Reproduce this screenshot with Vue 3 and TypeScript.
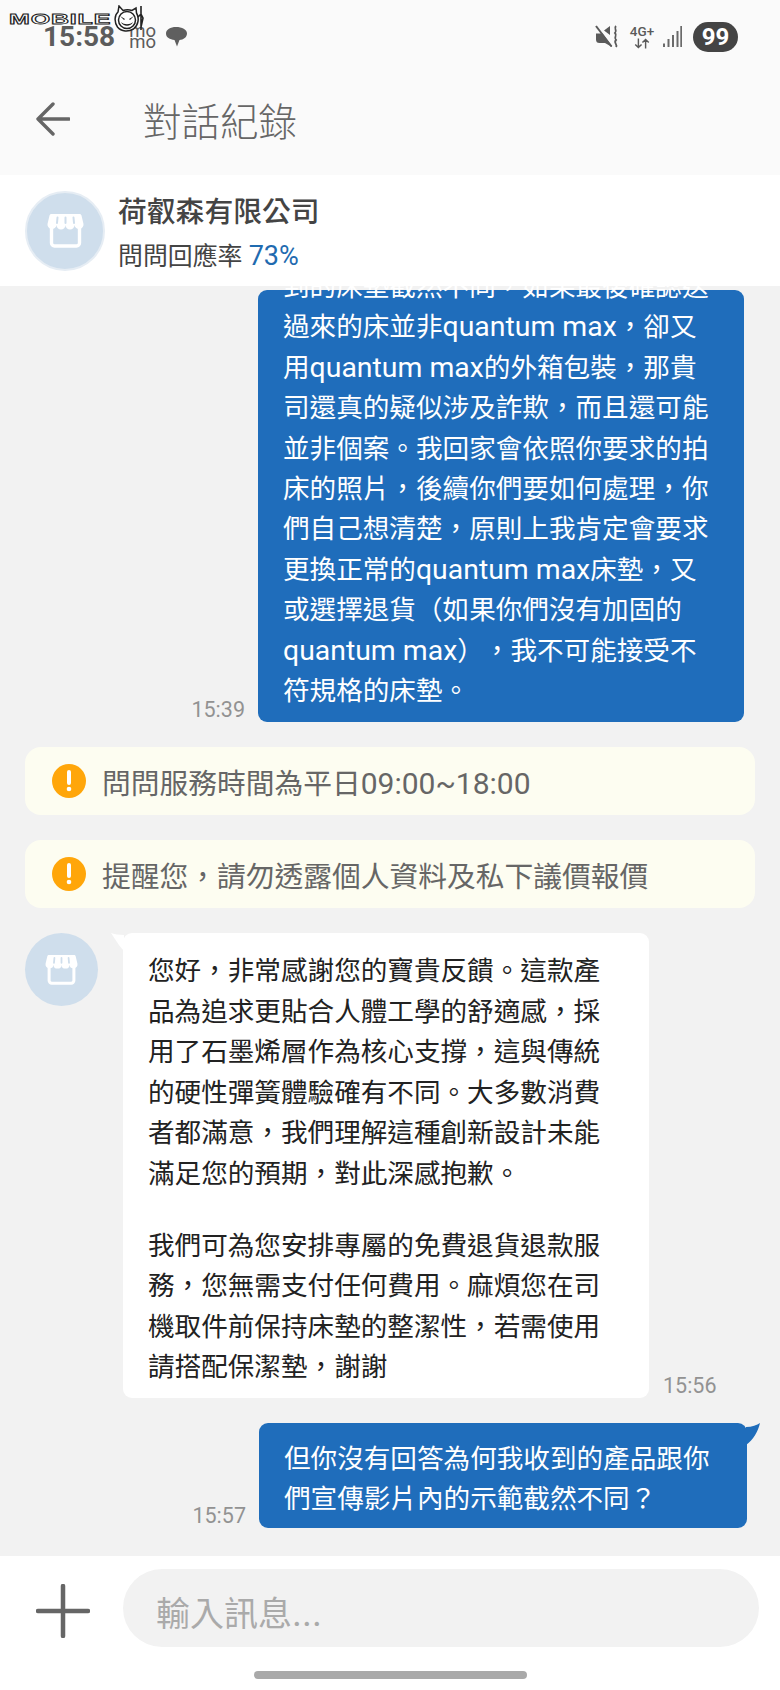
<script setup lang="ts">
const firstMessage = [
  '到的床墊截然不同，如果最後確認送',
  '過來的床並非quantum max，卻又',
  '用quantum max的外箱包裝，那貴',
  '司還真的疑似涉及詐欺，而且還可能',
  '並非個案。我回家會依照你要求的拍',
  '床的照片，後續你們要如何處理，你',
  '們自己想清楚，原則上我肯定會要求',
  '更換正常的quantum max床墊，又',
  '或選擇退貨（如果你們沒有加固的',
  'quantum max），我不可能接受不',
  '符規格的床墊。',
]

const notices = ['問問服務時間為平日09:00~18:00', '提醒您，請勿透露個人資料及私下議價報價']

const replyParagraphs = [
  [
    '您好，非常感謝您的寶貴反饋。這款產',
    '品為追求更貼合人體工學的舒適感，採',
    '用了石墨烯層作為核心支撐，這與傳統',
    '的硬性彈簧體驗確有不同。大多數消費',
    '者都滿意，我們理解這種創新設計未能',
    '滿足您的預期，對此深感抱歉。',
  ],
  [
    '我們可為您安排專屬的免費退貨退款服',
    '務，您無需支付任何費用。麻煩您在司',
    '機取件前保持床墊的整潔性，若需使用',
    '請搭配保潔墊，謝謝',
  ],
]

const lastMessage = ['但你沒有回答為何我收到的產品跟你', '們宣傳影片內的示範截然不同？']

// latin words sit a bit larger than the CJK around them
const latinWords = /(quantum max|09:00~18:00)/
const splitLatin = (line: string) => line.split(latinWords).filter(Boolean)
const isLatin = (part: string) => latinWords.test(part)
</script>

<template>
  <div class="page" lang="zh-TW">
    <header class="top">
      <div class="status">
        <div class="status-left">
          <span class="clock">15:58</span>
          <span class="momo"><span>mo</span><span>mo</span></span>
          <svg class="chat-icon" viewBox="0 0 23 22">
            <path d="M11 1c6 0 11 2.400 11 6.500 0 3.800-3.500 6.300-7.500 6.500l-2.500 6.500-2.500-6.600C5 13.600 1 11.500 1 7.500 1 3.400 5.500 1 11 1z" fill="#5f5f5f" />
          </svg>
        </div>
        <div class="status-right">
          <svg class="mute" viewBox="0 0 24 24">
            <path d="M1 8.500h4.500L8 7l9 12v3l-7-4H4.500A3.500 3.500 0 0 1 1 14.500z" fill="#5a5a5a" />
            <path d="M9 5.500 15 1v9z" fill="#5a5a5a" />
            <path d="M2.500 0 18 20.500" stroke="#fafafa" stroke-width="2.200" />
            <path d="M1 1 16.500 21.500" stroke="#5a5a5a" stroke-width="2" />
            <path d="M21 1c-3 3 2 4-1 7 3 3-2 4 1 7-3 3 2 4 0 7" fill="none" stroke="#5a5a5a" stroke-width="1.800" />
          </svg>
          <div class="net">
            <span>4G+</span>
            <svg viewBox="0 0 20 11">
              <path d="M6 0v10M2.500 6.500 6 10l3.500-3.500M14 11V1M10.500 4.500 14 1l3.500 3.500" fill="none" stroke="#5a5a5a" stroke-width="1.600" />
            </svg>
          </div>
          <svg class="signal" viewBox="0 0 20 21">
            <path d="M1 17.500h2V21H1zM5.500 13h2v8h-2zM10 9h2v12h-2zM14.500 5h2v16h-2zM18.300 0H20v21h-1.700z" fill="#6a6a6a" />
          </svg>
          <span class="battery">99</span>
        </div>
      </div>
      <div class="title-bar">
        <svg class="back" viewBox="0 0 34 34">
          <path d="M33 17H3M17 2 2 17l15 15" fill="none" stroke="#666" stroke-width="3.400" stroke-linecap="round" stroke-linejoin="round" />
        </svg>
        <h1 class="title">對話紀錄</h1>
      </div>
    </header>

    <div class="contact">
      <div class="avatar avatar-ring">
        <svg class="store" viewBox="0 0 37 35">
          <path d="M4.500 1h28c1 0 1.800.6 2 1.500L36.500 11a4.500 4.500 0 0 1-9 1 4.500 4.500 0 0 1-9 0 4.500 4.500 0 0 1-9 0 4.500 4.500 0 0 1-9-1l2-8.500C2.700 1.600 3.500 1 4.500 1z" fill="#fff" />
          <path class="slot" d="M10.500 4.500 10 10M18.500 4.500V10M26.500 4.500 27 10" />
          <path d="M4.500 13v17a3 3 0 0 0 3 3h22a3 3 0 0 0 3-3V13" fill="none" stroke="#fff" stroke-width="3.400" />
        </svg>
      </div>
      <div class="contact-text">
        <div class="company">荷叡森有限公司</div>
        <div class="rate">問問回應率 <span class="rate-num">73%</span></div>
      </div>
    </div>

    <main class="chat">
      <div class="row row-mine">
        <span class="time">15:39</span>
        <div class="bubble bubble-mine bubble-cut">
          <div v-for="line in firstMessage" :key="line" class="line">
            <template v-for="part in splitLatin(line)" :key="part">
              <span v-if="isLatin(part)" class="latin">{{ part }}</span>
              <template v-else>{{ part }}</template>
            </template>
          </div>
        </div>
      </div>

      <div v-for="text in notices" :key="text" class="notice">
        <svg class="warn" viewBox="0 0 34 34">
          <circle cx="17" cy="17" r="17" fill="#ffa60a" />
          <path d="M17 8v11" stroke="#fff" stroke-width="4" stroke-linecap="round" />
          <circle cx="17" cy="25" r="2.300" fill="#fff" />
        </svg>
        <span>
          <template v-for="part in splitLatin(text)" :key="part">
            <span v-if="isLatin(part)" class="notice-latin">{{ part }}</span>
            <template v-else>{{ part }}</template>
          </template>
        </span>
      </div>

      <div class="row">
        <div class="avatar avatar-small">
          <svg class="store store-small" viewBox="0 0 37 35">
            <path d="M4.500 1h28c1 0 1.800.6 2 1.500L36.500 11a4.500 4.500 0 0 1-9 1 4.500 4.500 0 0 1-9 0 4.500 4.500 0 0 1-9 0 4.500 4.500 0 0 1-9-1l2-8.500C2.700 1.600 3.500 1 4.500 1z" fill="#fff" />
            <path class="slot" d="M10.500 4.500 10 10M18.500 4.500V10M26.500 4.500 27 10" />
            <path d="M4.500 13v17a3 3 0 0 0 3 3h22a3 3 0 0 0 3-3V13" fill="none" stroke="#fff" stroke-width="3.400" />
          </svg>
        </div>
        <div class="bubble bubble-other">
          <svg class="tail tail-left" viewBox="0 0 13 18"><path d="M0 0c3 1 8 2 13 2v16C9 14 4 6 0 0z" fill="#fff" /></svg>
          <p v-for="(para, i) in replyParagraphs" :key="i" class="para">
            <span v-for="line in para" :key="line" class="line">{{ line }}</span>
          </p>
        </div>
        <span class="time">15:56</span>
      </div>

      <div class="row row-mine row-last">
        <span class="time">15:57</span>
        <div class="bubble bubble-mine bubble-last">
          <svg class="tail tail-right" viewBox="0 0 14 22"><path d="M14 0C11 2 6 4 0 4v18C7 17 12 9 14 0z" fill="#1f6dbb" /></svg>
          <div v-for="line in lastMessage" :key="line" class="line">{{ line }}</div>
        </div>
      </div>
    </main>

    <footer class="composer">
      <div class="input-row">
        <svg class="plus" viewBox="0 0 54 54">
          <path d="M27 2v50M2 27h50" stroke="#666" stroke-width="4.500" stroke-linecap="round" />
        </svg>
        <div class="input">輸入訊息<span class="dots">...</span></div>
      </div>
      <div class="home-bar"></div>
    </footer>

    <div class="watermark">
      <span class="wm-text">MOBILE</span>
      <svg class="wm-face" viewBox="0 0 30 28">
        <path d="M5 1l4 4.500c3-1 6-1 9 0L22 3l.5 5c3 5 2 12-3 16-5 3-12 3-16-2C0 17 .5 10 4 7z" fill="#fff" stroke="#222" stroke-width="1.500" />
        <circle cx="13" cy="15" r="8.500" fill="#fff" stroke="#222" stroke-width="1.500" />
        <path d="M6 11l5 3-1 1zM20 11l-5 3 1 1zM7 17c3 3 9 3 12 0-2 5-10 5-12 0z" fill="#222" />
        <path d="M27 1v24M24 12l3-3 2 4-2 9" fill="none" stroke="#222" stroke-width="1.600" />
      </svg>
    </div>
  </div>
</template>

<style>
html,
body {
  margin: 0;
  padding: 0;
}
</style>

<style scoped>
.page {
  position: relative;
  width: 780px;
  height: 1690px;
  overflow: hidden;
  display: flex;
  flex-direction: column;
  background: #f2f2f2;
  font-family: Roboto, "Noto Sans CJK TC", sans-serif;
  text-spacing-trim: space-all;
}

.top {
  height: 175px;
  flex: none;
  background: #fafafa;
}

.status {
  height: 73px;
  padding: 0 42px 0 43px;
  display: flex;
  justify-content: space-between;
  align-items: center;
}

.status-left,
.status-right {
  display: flex;
  align-items: center;
}

.clock {
  font-size: 28px;
  font-weight: 700;
  color: #5c5c5c;
}

.momo {
  display: flex;
  flex-direction: column;
  margin-left: 14px;
  font-size: 18.500px;
  line-height: 11px;
  color: #5c5c5c;
}

.chat-icon {
  width: 23px;
  height: 22px;
  margin-left: 9px;
}

.mute {
  width: 24px;
  height: 24px;
}

.net {
  width: 26px;
  margin-left: 10px;
  display: flex;
  flex-direction: column;
  align-items: center;
  font-size: 13.500px;
  line-height: 13px;
  font-weight: 500;
  color: #5a5a5a;
}

.net svg {
  width: 18px;
  height: 11px;
}

.signal {
  width: 20px;
  height: 21px;
  margin-left: 7px;
}

.battery {
  width: 45px;
  height: 30px;
  margin-left: 11px;
  border-radius: 15px;
  background: #444;
  color: #fff;
  font-size: 24px;
  font-weight: 700;
  line-height: 30px;
  text-align: center;
}

.title-bar {
  height: 91px;
  padding-left: 36px;
  display: flex;
  align-items: center;
}

.back {
  width: 34px;
  height: 34px;
}

.title {
  margin: 0 0 0 73px;
  font-size: 38.500px;
  font-weight: 300;
  color: #666;
}

.contact {
  height: 111px;
  flex: none;
  box-sizing: border-box;
  padding-left: 25px;
  display: flex;
  align-items: center;
  background: #fff;
}

.avatar {
  flex: none;
  display: flex;
  align-items: center;
  justify-content: center;
  border-radius: 50%;
  background: #cfdeec;
}

.avatar-ring {
  width: 76px;
  height: 76px;
  border: 2px solid #e6edf4;
}

.avatar-small {
  width: 73px;
  height: 73px;
  align-self: flex-start;
}

.store {
  width: 37px;
  height: 35px;
}

.store-small {
  width: 33px;
  height: 31px;
}

.slot {
  fill: none;
  stroke: #cfdeec;
  stroke-width: 2;
  stroke-linecap: round;
}

.contact-text {
  margin-left: 13px;
  padding-top: 5px;
}

.company {
  font-size: 28.800px;
  font-weight: 500;
  line-height: 42px;
  color: #444;
}

.rate {
  margin-top: 5px;
  font-size: 24.900px;
  line-height: 36px;
  color: #444;
}

.rate-num {
  font-size: 27px;
  color: #1f6bb0;
}

.chat {
  flex: 1;
  min-height: 0;
  overflow: hidden;
  box-sizing: border-box;
  padding: 4px 25px 0;
  display: flex;
  flex-direction: column;
  gap: 25px;
}

.row {
  display: flex;
  align-items: flex-end;
  flex: none;
}

.row-mine {
  justify-content: flex-end;
  margin-right: 11px;
}

.row-last {
  margin-right: 8px;
}

.time {
  flex: none;
  font-size: 21.500px;
  line-height: 25px;
  color: #929292;
}

.row-mine .time {
  margin-right: 13px;
}

.row:not(.row-mine) .time {
  margin-left: 14px;
}

.bubble {
  position: relative;
  box-sizing: border-box;
  font-size: 26.600px;
  line-height: 40.400px;
}

.bubble-mine {
  width: 486px;
  padding: 15px 25px 11px;
  border-radius: 9px;
  background: #1f6dbb;
  color: #fff;
}

.bubble-cut .line:first-child {
  margin-top: -38px;
}

.bubble-last {
  width: 488px;
  padding: 16px 25px 9px;
}

.bubble-other {
  width: 526px;
  margin-left: 25px;
  padding: 18px 25px 10px;
  border-radius: 9px;
  background: #fff;
  color: #222;
}

.line {
  display: block;
  white-space: nowrap;
}

.latin {
  font-size: 28.400px;
}

.para {
  margin: 0;
}

.para + .para {
  margin-top: 32px;
}

.tail {
  position: absolute;
  top: 0;
}

.tail-left {
  left: -12px;
  width: 13px;
  height: 18px;
}

.tail-right {
  right: -13px;
  width: 14px;
  height: 22px;
}

.notice {
  flex: none;
  height: 68px;
  box-sizing: border-box;
  padding-left: 27px;
  display: flex;
  align-items: center;
  gap: 16px;
  border-radius: 16px;
  background: #fdfdf1;
  font-size: 28.750px;
  color: #666;
}

.notice-latin {
  font-size: 30px;
}

.warn {
  width: 34px;
  height: 34px;
  flex: none;
}

.composer {
  height: 134px;
  flex: none;
  background: #fff;
}

.input-row {
  height: 78px;
  padding: 13px 21px 0 36px;
  display: flex;
  align-items: center;
}

.plus {
  width: 54px;
  height: 54px;
  flex: none;
  margin-top: 6px;
}

.input {
  flex: 1;
  height: 78px;
  margin-left: 33px;
  padding-left: 33px;
  border-radius: 39px;
  background: #f2f2f2;
  color: #aaa;
  font-size: 34px;
  line-height: 88px;
}

.dots {
  font-size: 38px;
}

.home-bar {
  width: 273px;
  height: 8px;
  margin: 24px auto 0;
  border-radius: 4px;
  background: #a9a9a9;
}

.watermark {
  position: absolute;
  top: 5px;
  left: 9px;
  display: flex;
  align-items: flex-start;
}

.wm-text {
  width: 105px;
  margin-top: 6px;
  font-family: "Liberation Sans", sans-serif;
  font-size: 14px;
  font-weight: 700;
  line-height: 16px;
  letter-spacing: 0.500px;
  color: #fff;
  -webkit-text-stroke: 0.800px #222;
  transform: scaleX(1.780);
  transform-origin: left center;
}

.wm-face {
  width: 30px;
  height: 28px;
}
</style>
